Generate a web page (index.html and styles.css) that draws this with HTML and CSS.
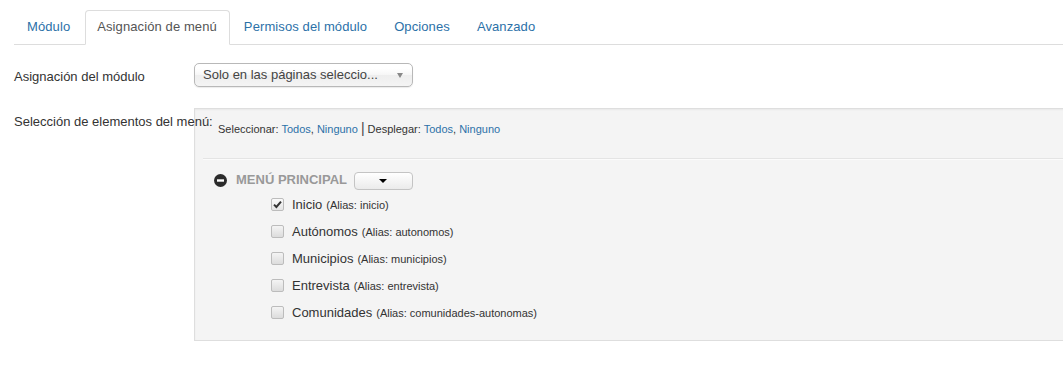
FILE: index.html
```html
<!DOCTYPE html>
<html lang="es">

<head>
  <meta charset="UTF-8">
  <title>Asignación de menú</title>
  <link rel="stylesheet" href="styles.css">
</head>

<body>
  <div class="page">
    <ul class="tabs">
      <li><a href="#">Módulo</a></li>
      <li class="active"><a href="#">Asignación de menú</a></li>
      <li><a href="#">Permisos del módulo</a></li>
      <li><a href="#">Opciones</a></li>
      <li><a href="#">Avanzado</a></li>
    </ul>

    <div class="form">
      <div class="row">
        <label class="row-label">Asignación del módulo</label>
        <div class="controls">
          <div class="chosen">
            <span>Solo en las páginas seleccio...</span>
            <span class="chosen-arrow"></span>
          </div>
        </div>
      </div>

      <div class="row">
        <label class="row-label">Selección de elementos del menú:</label>
        <div class="controls">
          <div class="well">
            <div class="tools">
              Seleccionar: <a href="#">Todos</a>, <a href="#">Ninguno</a> <span class="sep">|</span> Desplegar: <a href="#">Todos</a>, <a href="#">Ninguno</a>
            </div>

            <div class="tree">
              <div class="tree-head">
                <svg class="toggle" width="13" height="13" viewBox="0 0 13 13">
                  <circle cx="6.5" cy="6.5" r="6.5" fill="#2b2b2b" />
                  <rect x="3" y="5.3" width="7" height="2.4" fill="#fff" />
                </svg>
                <span class="menu-title">MENÚ PRINCIPAL</span>
                <button class="drop"><span class="caret"></span></button>
              </div>

              <ul class="items">
                <li>
                  <span class="check checked">
                    <svg width="11" height="11" viewBox="0 0 11 11"><path d="M2 5.6 L4.4 8 L9 2.6" fill="none" stroke="#333" stroke-width="2" /></svg>
                  </span>
                  <span class="item-name">Inicio</span> <small>(Alias: inicio)</small>
                </li>
                <li><span class="check"></span><span class="item-name">Autónomos</span> <small>(Alias: autonomos)</small></li>
                <li><span class="check"></span><span class="item-name">Municipios</span> <small>(Alias: municipios)</small></li>
                <li><span class="check"></span><span class="item-name">Entrevista</span> <small>(Alias: entrevista)</small></li>
                <li><span class="check"></span><span class="item-name">Comunidades</span> <small>(Alias: comunidades-autonomas)</small></li>
              </ul>
            </div>
          </div>
        </div>
      </div>
    </div>
  </div>
</body>

</html>
```

FILE: styles.css
```css
html,
body {
  overflow: hidden;
}

body {
  margin: 0;
  background: #fff;
  font-family: "Liberation Sans", Arial, sans-serif;
  font-size: 13px;
  line-height: 18px;
  color: #333;
}

a {
  color: #2c71a8;
  text-decoration: none;
}

.page {
  padding: 10px 0 0 14px;
}

/* tabs */
.tabs {
  display: flex;
  margin: 0;
  padding: 0 0 0 1px;
  list-style: none;
  border-bottom: 1px solid #ddd;
  letter-spacing: 0.1px;
}

.tabs li {
  margin: 0 2px -1px 0;
}

.tabs a {
  display: block;
  padding: 7px 12px 8px 11px;
  line-height: 18px;
  border: 1px solid transparent;
  border-radius: 4px 4px 0 0;
}

.tabs .active a {
  color: #555;
  background: #fff;
  border-color: #ddd #ddd transparent;
}

/* form */
.form {
  margin-top: 18px;
}

.row {
  display: flex;
  margin-bottom: 21px;
}

.row-label {
  position: relative;
  flex: 0 0 180px;
  width: 180px;
  padding-top: 5px;
  white-space: nowrap;
}

.controls {
  flex: 1;
  margin-right: -4px;
}

.chosen {
  display: flex;
  align-items: center;
  justify-content: space-between;
  box-sizing: content-box;
  width: 209px;
  height: 22px;
  padding: 0 0 0 8px;
  border: 1px solid #b8b8b8;
  border-radius: 5px;
  background: linear-gradient(to bottom, #fff 20%, #f6f6f6 50%, #eee 52%, #f4f4f4 100%);
  box-shadow: 0 1px 1px rgba(0, 0, 0, 0.08);
  color: #444;
  line-height: 22px;
}

.chosen-arrow {
  width: 0;
  height: 0;
  margin-right: 9px;
  border-left: 3px solid transparent;
  border-right: 3px solid transparent;
  border-top: 5px solid #888;
}

/* well */
.well {
  padding: 11px 0 14px 23px;
  background: #f4f4f4;
  border: 1px solid #dedede;
  border-right: none;
  box-shadow: inset 0 1px 2px rgba(0, 0, 0, 0.05);
}

.tools {
  font-size: 11px;
  line-height: 16px;
  color: #333;
}

.tools .sep {
  font-size: 14px;
  color: #444;
}

.tree {
  margin: 21px 0 0 -15px;
  padding: 12px 0 0 11px;
  border-top: 1px solid #e4e4e4;
  box-shadow: inset 0 1px 0 #fbfbfb;
}

.tree-head {
  display: flex;
  align-items: center;
  height: 18px;
}

.toggle {
  margin-right: 9px;
}

.menu-title {
  font-size: 13px;
  font-weight: bold;
  color: #999;
}

.drop {
  display: flex;
  align-items: center;
  justify-content: center;
  width: 59px;
  height: 18px;
  margin: 1px 0 0 7px;
  padding: 0;
  border: 1px solid #c4c4c4;
  border-radius: 4px;
  background: linear-gradient(to bottom, #fff, #ebebeb);
}

.caret {
  width: 0;
  height: 0;
  border-left: 4px solid transparent;
  border-right: 4px solid transparent;
  border-top: 4px solid #000;
}

.items {
  margin: 2px 0 0;
  padding: 0 0 0 57px;
  list-style: none;
}

.items li {
  display: flex;
  align-items: center;
  height: 27px;
}

.check {
  display: flex;
  align-items: center;
  justify-content: center;
  width: 11px;
  height: 11px;
  margin-right: 8px;
  border: 1px solid #bcbcbc;
  border-radius: 2px;
  background: linear-gradient(to bottom, #f4f4f4, #dcdcdc);
}

.check.checked {
  background: linear-gradient(to bottom, #fafafa, #e4e4e4);
}

.item-name {
  color: #333;
}

.items small {
  margin-left: 4px;
  font-size: 11px;
  color: #333;
}
```
